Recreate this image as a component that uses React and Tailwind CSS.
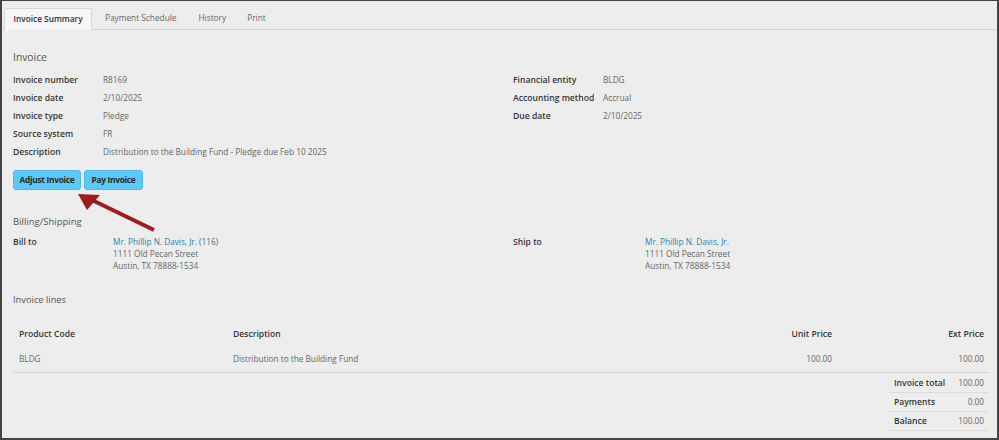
import React from "react";

const F = { fontFamily: '"Open Sans", "Liberation Sans", sans-serif' };

function Row({ label, value }) {
  return (
    <div className="flex h-[18px] items-center">
      <div className="w-[90px] font-semibold text-[#363636]">{label}</div>
      <div className="text-[#666] text-[8.25px]">{value}</div>
    </div>
  );
}

export default function App() {
  return (
    <div
      style={F}
      className="relative w-[999px] h-[440px] overflow-hidden bg-[#ededed] border-t border-l-2 border-r-2 border-b-2 border-[#444] text-[8.6px] leading-none"
    >
      {/* Tabs */}
      <div className="flex items-end pt-[7px] pl-[2px] border-b border-[#d4d4d4] h-[29px] text-[8.3px]">
        <div className="h-[22px] w-[88px] flex items-center justify-center bg-[#f6f6f6] border border-b-0 border-[#d8d8d8] rounded-t-[2px] font-semibold text-[#333] -mb-px">
          Invoice Summary
        </div>
        <div className="h-[21px] flex items-center pl-[13px] pr-[22px] text-[#666]">Payment Schedule</div>
        <div className="h-[21px] flex items-center pr-[21px] text-[#666]">History</div>
        <div className="h-[21px] flex items-center text-[#666]">Print</div>
      </div>

      <div className="pl-[11px] pr-[8px]">
        <div className="pt-[22px] text-[10.3px] text-[#555] h-[41px]">Invoice</div>
        <div className="flex">
          <div className="w-[500px]">
            <Row label="Invoice number" value="R8169" />
            <Row label="Invoice date" value="2/10/2025" />
            <Row label="Invoice type" value="Pledge" />
            <Row label="Source system" value="FR" />
            <Row label="Description" value="Distribution to the Building Fund - Pledge due Feb 10 2025" />
          </div>
          <div>
            <Row label="Financial entity" value="BLDG" />
            <Row label="Accounting method" value="Accrual" />
            <Row label="Due date" value="2/10/2025" />
          </div>
        </div>

        <div className="flex gap-[3px] mt-[9px] text-[8.4px] tracking-[-0.3px]">
          <div className="h-[20px] w-[68px] flex items-center justify-center bg-[#5bc8f7] border border-[#4fb9e6] rounded-[3px] font-bold text-[#2a2a2a]">
            Adjust Invoice
          </div>
          <div className="h-[20px] w-[59px] flex items-center justify-center bg-[#5bc8f7] border border-[#4fb9e6] rounded-[3px] font-bold text-[#2a2a2a]">
            Pay Invoice
          </div>
        </div>

        <div className="mt-[27px] text-[9.5px] text-[#555]">Billing/Shipping</div>
        <div className="flex mt-[9px]">
          <div className="w-[500px] flex">
            <div className="w-[100px] font-semibold text-[#363636] leading-[12px]">Bill to</div>
            <div className="leading-[12px] text-[#666] text-[8.25px]">
              <div>
                <span className="text-[#2b7fae]">Mr. Phillip N. Davis, Jr.</span> (116)
              </div>
              <div>1111 Old Pecan Street</div>
              <div>Austin, TX 78888-1534</div>
            </div>
          </div>
          <div className="flex">
            <div className="w-[132px] font-semibold text-[#363636] leading-[12px]">Ship to</div>
            <div className="leading-[12px] text-[#666] text-[8.25px]">
              <div className="text-[#2b7fae]">Mr. Phillip N. Davis, Jr.</div>
              <div>1111 Old Pecan Street</div>
              <div>Austin, TX 78888-1534</div>
            </div>
          </div>
        </div>

        <div className="mt-[23px] text-[9.3px] text-[#555]">Invoice lines</div>

        <div className="mt-[18px] w-[977px]">
          <div className="flex h-[25px] items-center px-[6px] font-semibold text-[#363636]">
            <div className="w-[214px]">Product Code</div>
            <div className="flex-1">Description</div>
            <div className="w-[120px] text-right">Unit Price</div>
            <div className="w-[152px] text-right">Ext Price</div>
          </div>
          <div className="flex h-[26px] items-center px-[6px] text-[#666] text-[8.25px] border-b border-[#d4d4d4]">
            <div className="w-[214px]">BLDG</div>
            <div className="flex-1">Distribution to the Building Fund</div>
            <div className="w-[120px] text-right">100.00</div>
            <div className="w-[152px] text-right">100.00</div>
          </div>
          <div className="flex justify-end pt-[1px]">
            <div className="w-[98px] mr-[2px]">
              {[
                ["Invoice total", "100.00"],
                ["Payments", "0.00"],
                ["Balance", "100.00"],
              ].map(([l, v]) => (
                <div key={l} className="flex h-[19px] items-center justify-between pl-[4px] pr-[4px] border-b border-[#dcdcdc]">
                  <span className="font-semibold text-[#363636]">{l}</span>
                  <span className="text-[#666] text-[8.25px]">{v}</span>
                </div>
              ))}
            </div>
          </div>
        </div>
      </div>

      {/* Arrow annotation */}
      <svg className="absolute left-0 top-0 pointer-events-none" width="999" height="440">
        <line x1="152" y1="229" x2="90" y2="199" stroke="#9e1b20" strokeWidth="4" strokeLinecap="butt" />
        <polygon points="76,193 85,209 98,194" fill="#9e1b20" />
      </svg>
    </div>
  );
}
